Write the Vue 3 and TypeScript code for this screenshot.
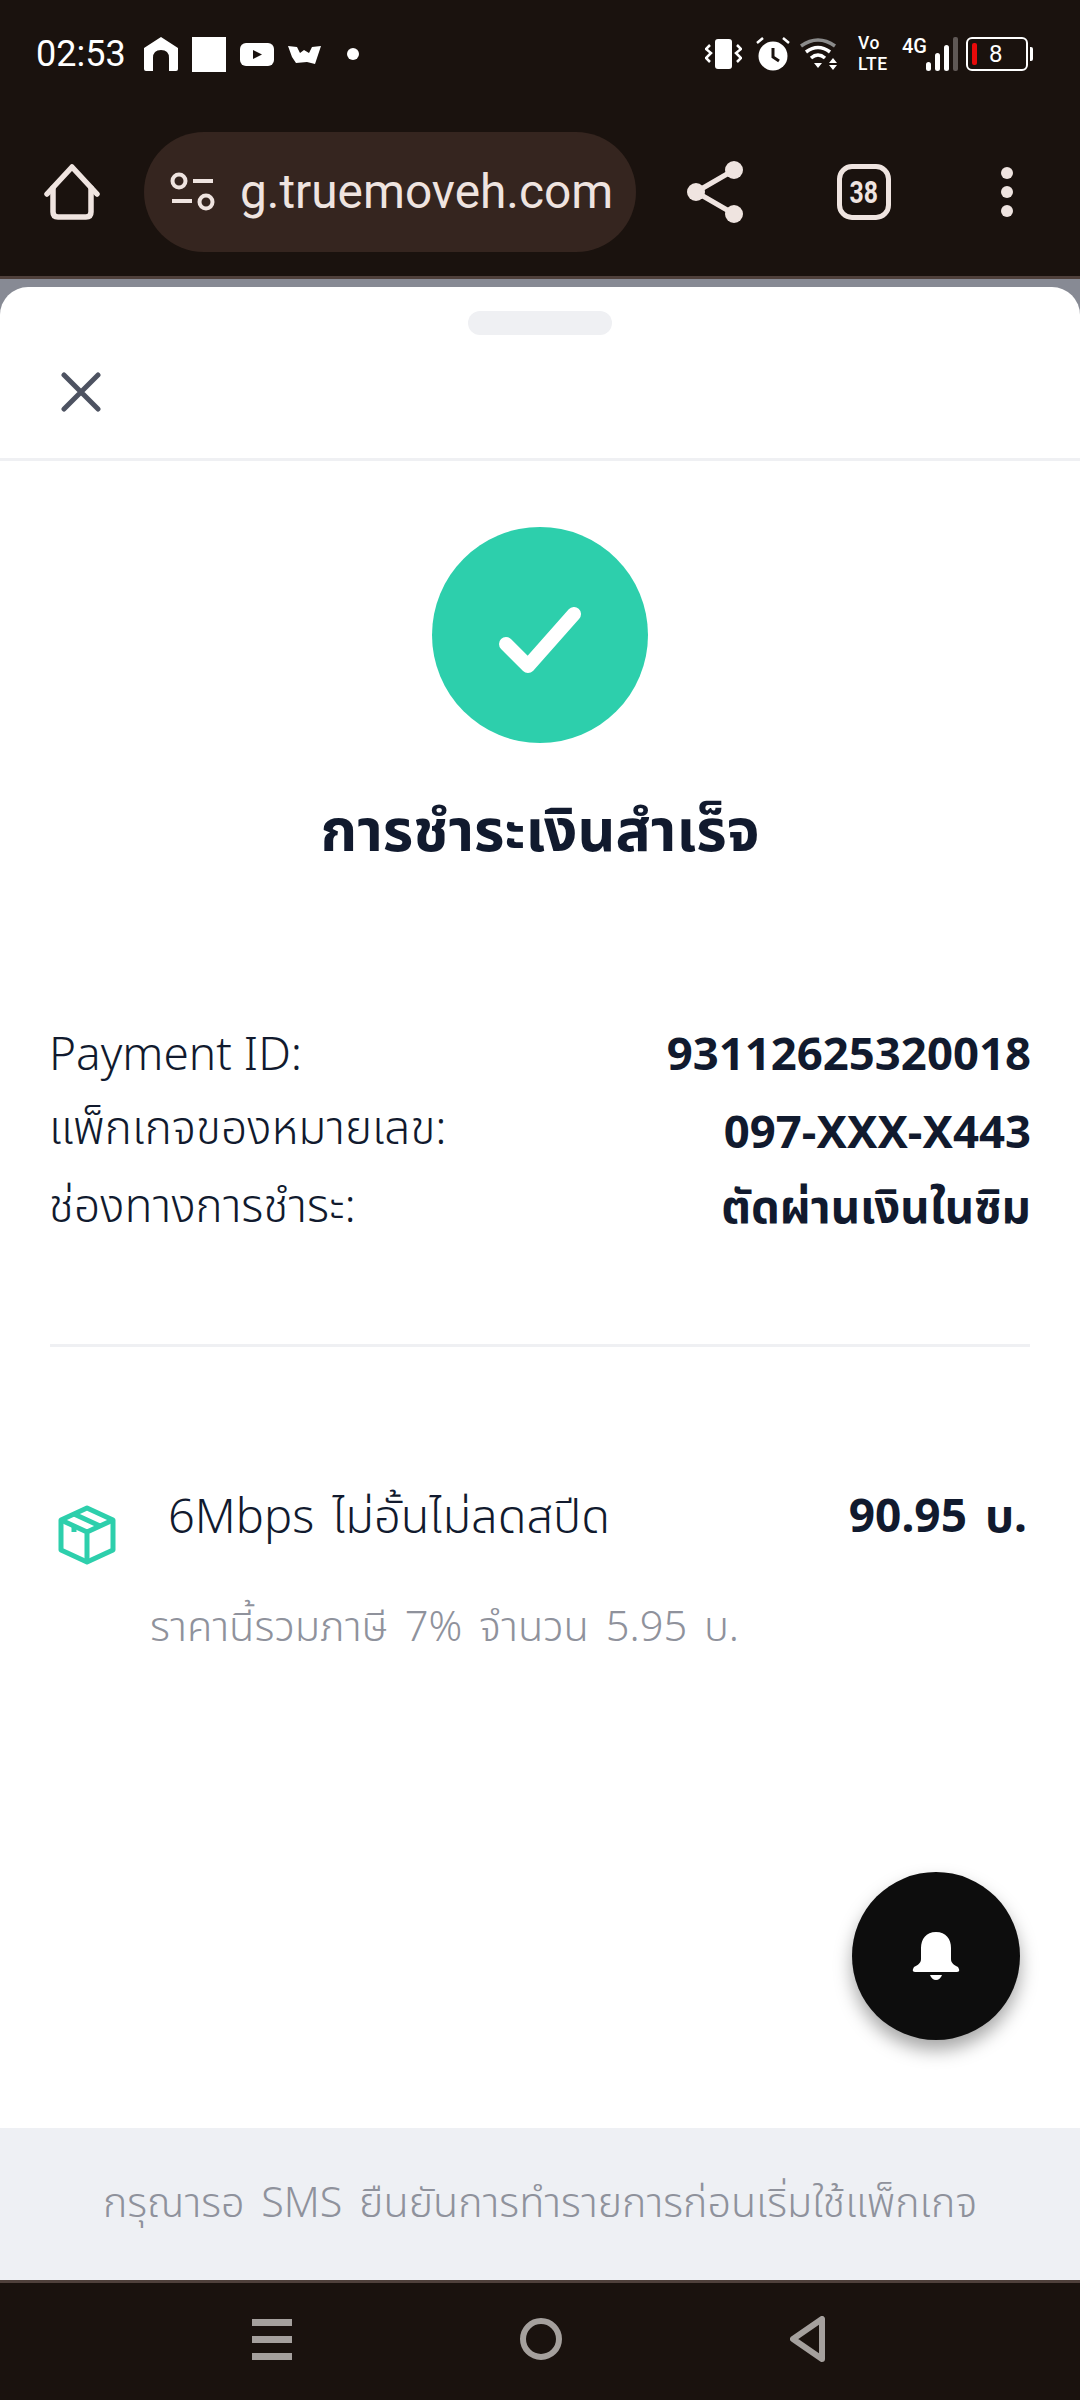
<script setup lang="ts">
interface InfoRow {
  label: string
  value: string
}

const rows: InfoRow[] = [
  { label: 'Payment ID:', value: '93112625320018' },
  { label: 'แพ็กเกจของหมายเลข:', value: '097-XXX-X443' },
  { label: 'ช่องทางการชำระ:', value: 'ตัดผ่านเงินในซิม' },
]
</script>

<template>
  <div class="screen">
    <header class="chrome">
      <div class="status">
        <div class="status-left">
          <span class="time">02:53</span>
          <svg width="34" height="34" viewBox="0 0 34 34"><path d="M17 0 L34 11 V32 Q34 34 32 34 H25 V21 Q25 13 17 13 Q9 13 9 21 V34 H2 Q0 34 0 32 V11 Z" fill="#fff" /></svg>
          <span class="square"></span>
          <svg class="ic-b" width="34" height="23" viewBox="0 0 34 23"><rect width="34" height="23" rx="6" fill="#fff" /><path d="M13 7 L22 11.5 L13 16 Z" fill="#1a120e" /></svg>
          <svg class="ic-c" width="33" height="19" viewBox="0 0 33 19"><path d="M0 1 L9 2 L12 8 L16 5 L21 8 L24 2 L33 1 L27 19 L19 17 L8 18 L4 12 Z" fill="#fff" /></svg>
          <span class="dot"></span>
        </div>
        <div class="status-right">
          <svg width="37" height="32" viewBox="0 0 37 32" fill="none"><rect x="10" y="1" width="17" height="30" rx="3" fill="#fff" /><path d="M5 7 L1 11 L6 15 L1 20 L5 24 M32 7 L36 11 L31 15 L36 20 L32 24" stroke="#fff" stroke-width="2.5" /></svg>
          <svg class="r-alarm" width="34" height="34" viewBox="0 0 34 34" fill="none"><circle cx="17" cy="19" r="14.5" fill="#fff" /><path d="M17 11 V20 L23 24" stroke="#1a120e" stroke-width="3" /><path d="M1 6 L7 1 M33 6 L27 1" stroke="#fff" stroke-width="2.5" /></svg>
          <svg class="r-wifi" width="38" height="32" viewBox="0 0 38 32" fill="none"><path d="M1 8 Q18 -4 35 8" stroke="#8b8b8b" stroke-width="3.5" /><path d="M6 14 Q18 5 30 14 M11 20 Q18 14 25 20" stroke="#fff" stroke-width="3.5" /><path d="M14 25 H22 L18 30 Z M33 20 L37 25 H29 Z M29 27 H37 L33 32 Z" fill="#fff" /></svg>
          <div class="volte">Vo<br />LTE</div>
          <span class="net">4G</span>
          <svg width="32" height="34" viewBox="0 0 32 34" fill="none"><rect x="0" y="25" width="5" height="9" rx="2.5" fill="#fff" /><rect x="9" y="16" width="5" height="18" rx="2.5" fill="#fff" /><rect x="18" y="8" width="5" height="26" rx="2.5" fill="#fff" /><rect x="27" y="0" width="5" height="34" rx="2" fill="#5f5855" /></svg>
          <div class="battery">
            <span class="battery-body"><i class="battery-low"></i><b>8</b></span>
            <span class="battery-tip"></span>
          </div>
        </div>
      </div>
      <div class="toolbar">
        <svg class="tool-home" width="56" height="56" viewBox="0 0 56 56" fill="none" stroke="#efe4e0" stroke-width="5.5" stroke-linecap="round" stroke-linejoin="round"><path d="M3 30 L28 3 L53 30" /><path d="M9 24 V48 Q9 53 14 53 H42 Q47 53 47 48 V24" /></svg>
        <div class="url-pill">
          <svg width="46" height="40" viewBox="0 0 46 40" fill="none" stroke="#efe4e0" stroke-width="4"><circle cx="9" cy="9" r="6.5" /><path d="M23 9 H43 M2 29 H22" /><circle cx="36" cy="30" r="6.5" /></svg>
          <span class="url">g.truemoveh.com</span>
        </div>
        <svg class="tool-share" width="56" height="62" viewBox="0 0 56 62" fill="#efe4e0"><circle cx="9" cy="31" r="9" /><circle cx="47" cy="9" r="9" /><circle cx="47" cy="53" r="9" /><path d="M9 31 L47 9 M9 31 L47 53" stroke="#efe4e0" stroke-width="5" /></svg>
        <div class="tabs"><span>38</span></div>
        <svg class="tool-more" width="12" height="50" viewBox="0 0 12 50" fill="#efe4e0"><circle cx="6" cy="6" r="6" /><circle cx="6" cy="25" r="6" /><circle cx="6" cy="44" r="6" /></svg>
      </div>
    </header>

    <div class="backdrop">
      <main class="sheet">
        <div class="sheet-head">
          <div class="handle"></div>
          <svg class="close" width="40" height="40" viewBox="0 0 40 40" fill="none" stroke="#4d5261" stroke-width="5" stroke-linecap="round"><path d="M3 3 L37 37 M37 3 L3 37" /></svg>
        </div>

        <div class="body">
          <div class="success">
            <div class="success-circle">
              <svg class="check" width="82" height="66" viewBox="0 0 82 66" fill="none" stroke="#fff" stroke-width="14" stroke-linecap="round" stroke-linejoin="round"><path d="M7 37 L29 59 L75 7" /></svg>
            </div>
            <h1 class="title">การชำระเงินสำเร็จ</h1>
          </div>

          <div class="info">
            <div v-for="row in rows" :key="row.label" class="info-row">
              <span class="info-label">{{ row.label }}</span>
              <span class="info-value">{{ row.value }}</span>
            </div>
          </div>

          <div class="rule"></div>

          <div class="package">
            <svg class="box" width="58" height="60" viewBox="0 0 58 60" fill="none" stroke="#2dcfac" stroke-width="5" stroke-linejoin="round"><path d="M29 3 L55 15 V45 L29 57 L3 45 V15 Z" /><path d="M3 15 L29 27 L55 15 M29 27 V57" /><path d="M16 9 L42 21 M16 21 V27" /></svg>
            <span class="package-name">6Mbps ไม่อั้นไม่ลดสปีด</span>
            <span class="package-price">90.95 บ.</span>
          </div>
          <p class="tax">ราคานี้รวมภาษี 7% จำนวน 5.95 บ.</p>

          <button class="fab" type="button" aria-label="notifications">
            <svg width="48" height="48" viewBox="0 0 48 48" fill="#fff"><path d="M24 0 C34 0 39 7 39 16 V27 C39 31 42 33 46 35 Q49 40 45 40 H3 Q-1 40 2 35 C6 33 9 31 9 27 V16 C9 7 14 0 24 0 Z" /><path d="M18 43 H30 Q28 48 24 48 Q20 48 18 43 Z" /></svg>
          </button>
        </div>

        <footer class="notice">กรุณารอ SMS ยืนยันการทำรายการก่อนเริ่มใช้แพ็กเกจ</footer>
      </main>
    </div>

    <nav class="navbar">
      <div class="nav-menu"><i></i><i></i><i></i></div>
      <span class="nav-home"></span>
      <svg width="36" height="46" viewBox="0 0 36 46" fill="none" stroke="#a5a09d" stroke-width="6" stroke-linejoin="round"><path d="M32 3 V43 L3 23 Z" /></svg>
    </nav>
  </div>
</template>

<style scoped>
.screen {
  width: 1080px;
  height: 2400px;
  display: flex;
  flex-direction: column;
  overflow: hidden;
  font-family: "Noto Sans", "Noto Sans Thai", "DejaVu Sans", sans-serif;
  color: #111a2e;
  background: #fff;
}

.chrome {
  height: 279px;
  box-sizing: border-box;
  flex: none;
  background: #1a120e;
  border-bottom: 3px solid #4f403b;
}

.status {
  height: 108px;
  padding: 0 47px 0 36px;
  box-sizing: border-box;
  display: flex;
  justify-content: space-between;
  align-items: center;
}

.status-left,
.status-right {
  display: flex;
  align-items: center;
}

.time {
  font: 400 36px Roboto, sans-serif;
  color: #fff;
  width: 108px;
}

.square {
  width: 34px;
  height: 35px;
  background: #fff;
  margin-left: 14px;
}

.ic-b {
  margin-left: 14px;
}

.ic-c {
  margin-left: 14px;
}

.dot {
  width: 12px;
  height: 12px;
  border-radius: 50%;
  background: #fff;
  margin-left: 26px;
}

.r-alarm {
  margin-left: 14px;
}

.r-wifi {
  margin-left: 10px;
}

.volte {
  margin-left: 20px;
  width: 32px;
  color: #fff;
  font: 500 17.5px/21px Roboto, sans-serif;
  letter-spacing: 0.6px;
}

.net {
  margin-left: 12px;
  margin-bottom: 16px;
  width: 24px;
  color: #fff;
  font: 500 20px/18px Roboto, sans-serif;
}

.battery {
  display: flex;
  align-items: center;
  margin-left: 8px;
}

.battery-body {
  width: 62px;
  height: 34px;
  box-sizing: border-box;
  border: 2px solid #fff;
  border-radius: 6px;
  display: flex;
  align-items: center;
  color: #fff;
  padding-left: 4px;
}

.battery-low {
  width: 5px;
  height: 22px;
  border-radius: 2px;
  background: #e80a0a;
}

.battery-body b {
  font: 400 24px Roboto, sans-serif;
  margin-left: 12px;
}

.battery-tip {
  width: 3px;
  height: 14px;
  margin-left: 2px;
  background: #fff;
  border-radius: 0 2px 2px 0;
}

.toolbar {
  height: 168px;
  display: flex;
  align-items: center;
  padding-left: 44px;
}

.tool-home {
  flex: none;
}

.url-pill {
  width: 492px;
  height: 120px;
  margin-left: 44px;
  padding-left: 26px;
  box-sizing: border-box;
  flex: none;
  display: flex;
  align-items: center;
  gap: 24px;
  border-radius: 60px;
  background: #35251f;
}

.url {
  font: 400 47.8px Roboto, sans-serif;
  color: #efe4e0;
  white-space: nowrap;
}

.tool-share {
  margin-left: 51px;
  flex: none;
}

.tabs {
  width: 54px;
  height: 56px;
  margin-left: 94px;
  box-sizing: border-box;
  flex: none;
  display: flex;
  align-items: center;
  justify-content: center;
  border: 5px solid #efe4e0;
  border-radius: 15px;
  color: #efe4e0;
  font: 700 31px Roboto, sans-serif;
}

.tabs span {
  display: block;
  transform: scaleX(0.8);
}

.tool-more {
  margin-left: 110px;
  flex: none;
}

.backdrop {
  flex: 1;
  min-height: 0;
  display: flex;
  padding-top: 8px;
  background: #878a94;
}

.sheet {
  flex: 1;
  display: flex;
  flex-direction: column;
  overflow: hidden;
  border-radius: 28px 28px 0 0;
  background: #fff;
}

.sheet-head {
  height: 174px;
  flex: none;
  box-sizing: border-box;
  border-bottom: 3px solid #eff0f3;
  padding-top: 24px;
}

.handle {
  width: 144px;
  height: 24px;
  margin: 0 auto;
  border-radius: 12px;
  background: #eff0f3;
}

.close {
  display: block;
  margin: 37px 0 0 61px;
}

.body {
  flex: 1;
  position: relative;
  min-height: 0;
  padding: 66px 50px 0;
}

.success {
  display: flex;
  flex-direction: column;
  align-items: center;
}

.success-circle {
  width: 216px;
  height: 216px;
  display: flex;
  align-items: center;
  justify-content: center;
  border-radius: 50%;
  background: #2dcfac;
}

.check {
  margin-top: 10px;
}

.title {
  margin: 49px 0 0;
  font-size: 58.8px;
  line-height: 72px;
  font-weight: 700;
  color: #111a2e;
}

.info {
  margin: 157px -1px 0;
  display: flex;
  flex-direction: column;
  gap: 16px;
}

.info-row {
  display: flex;
  justify-content: space-between;
  align-items: center;
  height: 62px;
}

.info-label {
  font-size: 46px;
  font-weight: 300;
  color: #111a2e;
}

.info-value {
  font-size: 45.5px;
  font-weight: 700;
  color: #111a2e;
}

.rule {
  height: 3px;
  margin-top: 105px;
  background: #eff0f3;
}

.package {
  margin-top: 124px;
  display: flex;
  align-items: center;
}

.box {
  margin: 34px 0 0 8px;
  flex: none;
}

.package-name {
  margin-left: 52px;
  flex: 1;
  font-size: 47px;
  font-weight: 300;
  word-spacing: 6px;
}

.package-price {
  margin-right: 3px;
  font-size: 46px;
  font-weight: 700;
  word-spacing: 6px;
}

.tax {
  margin: 32px 0 0 100px;
  font-size: 41.6px;
  font-weight: 300;
  color: #8f929c;
  word-spacing: 6px;
}

.fab {
  position: absolute;
  right: 60px;
  bottom: 88px;
  width: 168px;
  height: 168px;
  padding: 0;
  display: flex;
  align-items: center;
  justify-content: center;
  border: none;
  border-radius: 50%;
  background: #0d0d0d;
  box-shadow: 0 10px 18px rgba(0, 0, 0, 0.35);
}

.notice {
  height: 152px;
  flex: none;
  display: flex;
  align-items: center;
  justify-content: center;
  background: #eef0f4;
  color: #8f929c;
  font-size: 41.3px;
  font-weight: 300;
  word-spacing: 6px;
}

.navbar {
  height: 120px;
  flex: none;
  box-sizing: border-box;
  display: flex;
  align-items: center;
  justify-content: center;
  gap: 228px;
  padding: 0 2px 5px 0;
  background: #1a120e;
  border-top: 3px solid #4f403b;
}

.nav-menu {
  width: 40px;
  display: flex;
  flex-direction: column;
  gap: 10px;
}

.nav-menu i {
  display: block;
  height: 7px;
  background: #a5a09d;
}

.nav-home {
  width: 42px;
  height: 42px;
  box-sizing: border-box;
  border: 6px solid #a5a09d;
  border-radius: 50%;
}
</style>

<style>
html,
body {
  margin: 0;
  background: #fff;
}
</style>
